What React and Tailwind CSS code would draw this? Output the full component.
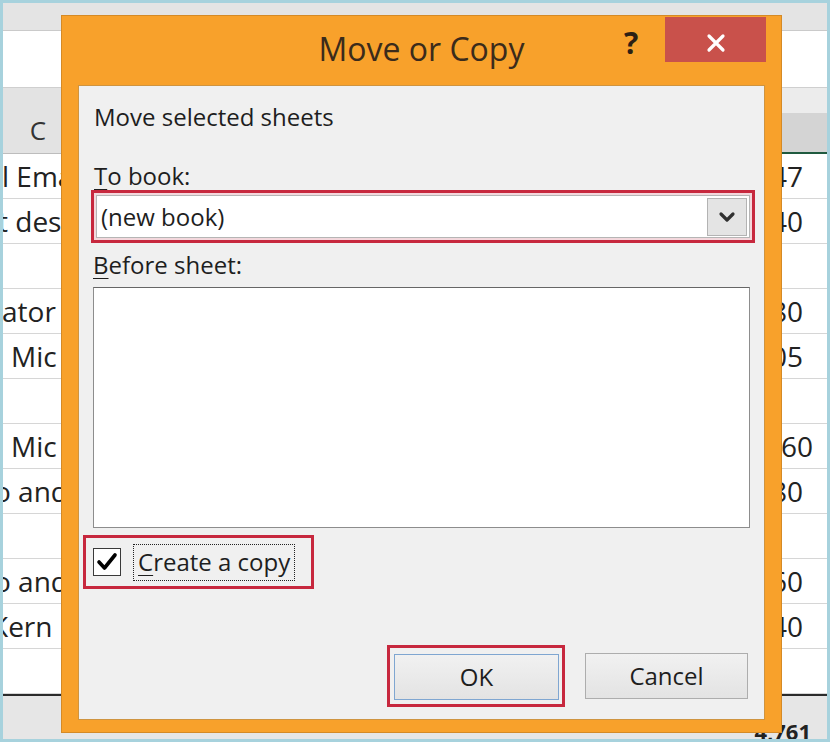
import React from 'react';

const rows = [
  { left: 'l Email', lm: 'ml-[-1px]', right: '247', rp: 'pr-[24px]' },
  { left: 't desc', lm: 'ml-[-5px]', right: '140', rp: 'pr-[24px]' },
  { left: '', lm: '', right: '', rp: '' },
  { left: 'ator', lm: 'ml-[-1px]', right: '380', rp: 'pr-[24px]' },
  { left: 'Mic', lm: 'ml-[8px]', right: '205', rp: 'pr-[24px]' },
  { left: '', lm: '', right: '', rp: '' },
  { left: 'Mic', lm: 'ml-[8px]', right: '160', rp: 'pr-[14px]' },
  { left: 'o and', lm: 'ml-[-9px]', right: '380', rp: 'pr-[24px]' },
  { left: '', lm: '', right: '', rp: '' },
  { left: 'o and', lm: 'ml-[-9px]', right: '460', rp: 'pr-[24px]' },
  { left: 'Kern', lm: 'ml-[-12px]', right: '240', rp: 'pr-[24px]' },
  { left: '', lm: '', right: '', rp: '' },
];

const Sheet = () => (
  <div className="flex flex-col w-full h-full">
    <div className="h-[28px] shrink-0 bg-[#e4e4e4] border-b border-[#cacaca]" />
    <div className="h-[57px] shrink-0 bg-white border-b border-[#cfcfcf]" />
    <div className="h-[66px] shrink-0 flex">
      <div className="flex-1 bg-[#e3e3e3] border-b border-[#bdbdbd] flex items-end">
        <span className="w-[70px] text-center text-[26px] leading-[26px] pb-[10px] text-[#333]">C</span>
      </div>
      <div className="w-[87px] flex flex-col">
        <div className="h-[25px] bg-[#ececec]" />
        <div className="flex-1 bg-[#d4d4d4] border-b-2 border-[#1f5a3f] flex items-end">
          <span className="pl-[28px] text-[26px] leading-[26px] pb-[8px] text-[#333]">E</span>
        </div>
      </div>
    </div>
    {rows.map((r, i) => (
      <div key={i} className="h-[45px] shrink-0 flex border-b border-[#d6d6d6] bg-white text-[28px] leading-[44px] text-[#222]">
        <div className="flex-1 overflow-hidden whitespace-nowrap">
          <span className={`inline-block ${r.lm}`}>{r.left}</span>
        </div>
        <div className={`w-[87px] text-right whitespace-nowrap ${r.rp}`}>{r.right}</div>
      </div>
    ))}
    <div className="h-[2px] shrink-0 bg-[#2b2b2b]" />
    <div className="flex-1 bg-[#e6e6e6] flex justify-end">
      <span className="pr-[16px] pt-[24px] text-[22px] leading-[22px] font-bold text-[#222]">4,761</span>
    </div>
  </div>
);

const Dialog = () => (
  <div className="absolute left-[58px] top-[12px] w-[721px] h-[718px] bg-[#f8a12b] border border-[#d58a26] flex flex-col">
    <div className="relative h-[69px] shrink-0 flex items-center justify-center">
      <span className="text-[32px] leading-[40px] text-[#3b2b1b] pb-[3px]">Move or Copy</span>
      <span className="absolute left-[562px] top-[12px] text-[30px] leading-[30px] font-bold text-[#2d2014]">?</span>
      <div className="absolute right-[15px] top-[1px] w-[101px] h-[45px] bg-[#c9514b] flex items-center justify-center">
        <svg width="20" height="20" viewBox="0 0 20 20" className="mt-[6px]">
          <path d="M3 3 L17 17 M17 3 L3 17" stroke="#ffffff" strokeWidth="3.2" strokeLinecap="round" />
        </svg>
      </div>
    </div>

    <div className="mx-[16px] mb-[12px] flex-1 bg-[#f0f0f0] border border-[#cf9440] flex flex-col pt-[17px] text-[24px] leading-[28px] text-[#1e1e1e]">
      <div className="ml-[15px] h-[28px]">Move selected sheets</div>

      <div className="ml-[15px] mt-[31px] h-[28px]">
        <u className="underline-offset-[4px] decoration-1">T</u>o book:
      </div>
      <div className="ml-[12px] mr-[9px] h-[53px] border-[3px] border-[#c7283e] bg-[#f3d7dc] p-[2px]">
        <div className="h-full bg-white border border-[#b5b5b5] flex items-center">
          <span className="pl-[4px] flex-1 leading-[28px]">(new book)</span>
          <div className="w-[40px] h-[38px] mr-[2px] bg-[#e4e4e4] border border-[#b3b3b3] flex items-center justify-center">
            <svg width="20" height="14" viewBox="0 0 20 14">
              <path d="M4 4 L10 10 L16 4" fill="none" stroke="#303030" strokeWidth="3.2" strokeLinecap="round" strokeLinejoin="round" />
            </svg>
          </div>
        </div>
      </div>

      <div className="ml-[14px] mt-[8px] h-[28px]">
        <u className="underline-offset-[4px] decoration-1">B</u>efore sheet:
      </div>
      <div className="ml-[14px] mr-[14px] mt-[8px] h-[241px] bg-white border border-[#8d8d8d] border-t-[#666]" />

      <div className="ml-[4px] mt-[7px] w-[231px] h-[54px] border-[3px] border-[#c7283e] flex items-center">
        <div className="ml-[7px] w-[28px] h-[28px] bg-white border-[1.5px] border-[#3a3a3a] flex items-center justify-center">
          <svg width="22" height="22" viewBox="0 0 22 22">
            <path d="M3 11 L8.5 17 L19 4" fill="none" stroke="#000" strokeWidth="3.6" strokeLinecap="round" strokeLinejoin="round" />
          </svg>
        </div>
        <div className="ml-[12px] h-[37px] px-[4px] border border-dotted border-[#222] flex items-center">
          <span><u className="underline-offset-[4px] decoration-1">C</u>reate a copy</span>
        </div>
      </div>

      <div className="mt-[56px] mr-[16px] h-[62px] flex items-center justify-end gap-[20px]">
        <div className="w-[178px] h-[62px] border-[3px] border-[#c7283e] pt-[6px] pb-[4px] pl-[4px] pr-[3px]">
          <div className="h-full bg-gradient-to-b from-[#f1f1f1] to-[#e3e3e3] border border-[#7fa6d1] flex items-center justify-center">
            OK
          </div>
        </div>
        <div className="w-[163px] h-[46px] bg-gradient-to-b from-[#f1f1f1] to-[#e3e3e3] border border-[#adadad] flex items-center justify-center">
          Cancel
        </div>
      </div>
    </div>
  </div>
);

export default function App() {
  return (
    <div
      className="relative w-[830px] h-[742px] overflow-hidden border-[3px] border-[#a7d2dd] bg-white"
      style={{ fontFamily: '"Open Sans", "Noto Sans", sans-serif' }}
    >
      <Sheet />
      <Dialog />
    </div>
  );
}
